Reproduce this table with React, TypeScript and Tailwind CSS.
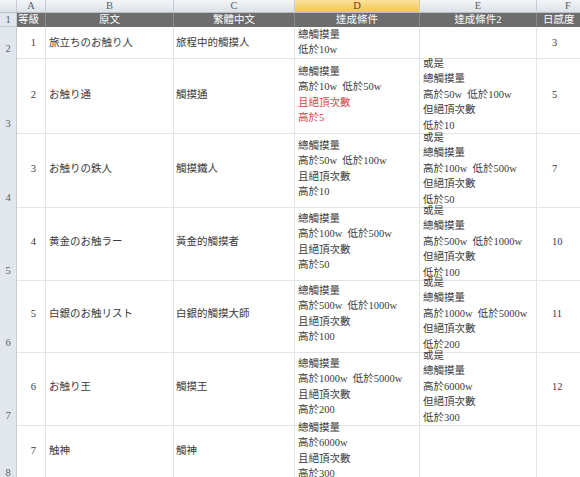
const cols = ["A", "B", "C", "D", "E", "F"];

type Row = {
  n: string;
  jp: string;
  zh: string;
  d: { t: string; red?: boolean }[];
  e: string[];
  f: string;
};

const rows: Row[] = [
  { n: "1", jp: "旅立ちのお触り人", zh: "旅程中的觸摸人", d: [{ t: "總觸摸量" }, { t: "低於10w" }], e: [], f: "3" },
  {
    n: "2",
    jp: "お触り通",
    zh: "觸摸通",
    d: [{ t: "總觸摸量" }, { t: "高於10w  低於50w" }, { t: "且絕頂次數", red: true }, { t: "高於5", red: true }],
    e: ["或是", "總觸摸量", "高於50w  低於100w", "但絕頂次數", "低於10"],
    f: "5",
  },
  {
    n: "3",
    jp: "お触りの鉄人",
    zh: "觸摸鐵人",
    d: [{ t: "總觸摸量" }, { t: "高於50w  低於100w" }, { t: "且絕頂次數" }, { t: "高於10" }],
    e: ["或是", "總觸摸量", "高於100w  低於500w", "但絕頂次數", "低於50"],
    f: "7",
  },
  {
    n: "4",
    jp: "黄金のお触ラー",
    zh: "黃金的觸摸者",
    d: [{ t: "總觸摸量" }, { t: "高於100w  低於500w" }, { t: "且絕頂次數" }, { t: "高於50" }],
    e: ["或是", "總觸摸量", "高於500w  低於1000w", "但絕頂次數", "低於100"],
    f: "10",
  },
  {
    n: "5",
    jp: "白銀のお触リスト",
    zh: "白銀的觸摸大師",
    d: [{ t: "總觸摸量" }, { t: "高於500w  低於1000w" }, { t: "且絕頂次數" }, { t: "高於100" }],
    e: ["或是", "總觸摸量", "高於1000w  低於5000w", "但絕頂次數", "低於200"],
    f: "11",
  },
  {
    n: "6",
    jp: "お触り王",
    zh: "觸摸王",
    d: [{ t: "總觸摸量" }, { t: "高於1000w  低於5000w" }, { t: "且絕頂次數" }, { t: "高於200" }],
    e: ["或是", "總觸摸量", "高於6000w", "但絕頂次數", "低於300"],
    f: "12",
  },
  {
    n: "7",
    jp: "触神",
    zh: "觸神",
    d: [{ t: "總觸摸量" }, { t: "高於6000w" }, { t: "且絕頂次數" }, { t: "高於300" }],
    e: [],
    f: "",
  },
];

// row heights, last row is cut by the window
const heights = ["h-[29px]", "h-[74px]", "h-[73px]", "h-[72px]", "h-[73px]", "h-[72px]", "h-[60px]"];

const font = { fontFamily: '"Liberation Serif", "Noto Sans CJK TC", serif' };

export default function App() {
  return (
    <div className="w-[580px] h-[477px] overflow-hidden bg-white text-[10.5px] text-[#3a3a3a]" style={font}>
      {/* column letters */}
      <div className="grid grid-cols-[17px_29px_128px_121px_125px_117px_63px] h-[13px] bg-gradient-to-b from-[#f3f5f8] to-[#dde2e8] border-b border-[#b9c0c9] text-[#5a5f66] leading-[12px]">
        <div className="border-r border-[#c6ccd4]" />
        {cols.map((c) => (
          <div
            key={c}
            className={
              c === "D"
                ? "text-center bg-gradient-to-b from-[#fbe29a] to-[#f3c746] border-r border-[#c6ccd4] text-[#5a4a20]"
                : "text-center border-r border-[#c6ccd4]"
            }
          >
            {c}
          </div>
        ))}
      </div>

      {/* header row */}
      <div className="grid grid-cols-[17px_29px_128px_121px_125px_117px_63px] h-[14px] leading-[13px]">
        <div className="bg-[#e2e7ed] border-r border-b border-[#c6ccd4] text-center text-[#5a5f66]">1</div>
        <div className="bg-[#6d6d6d] text-white border-r border-[#8a8a8a] pl-[1px]">等級</div>
        <div className="bg-[#6d6d6d] text-white border-r border-[#8a8a8a] text-center">原文</div>
        <div className="bg-[#6d6d6d] text-white border-r border-[#8a8a8a] text-center">繁體中文</div>
        <div className="bg-[#6d6d6d] text-white border-r border-[#8a8a8a] text-center">達成條件</div>
        <div className="bg-[#6d6d6d] text-white border-r border-[#8a8a8a] text-center">達成條件2</div>
        <div className="bg-[#6d6d6d] text-white pl-[6px]">日感度</div>
      </div>

      {rows.map((r, i) => (
        <div key={r.n} className={`grid grid-cols-[17px_29px_128px_121px_125px_117px_63px] ${heights[i]}`}>
          <div className="bg-[#e2e7ed] border-r border-b border-[#c6ccd4] flex items-end justify-center pb-[1px] text-[#5a5f66]">
            {i + 2}
          </div>
          <div className="border-r border-b border-[#e4e4e4] flex items-center justify-end pr-[9px]">{r.n}</div>
          <div className="border-r border-b border-[#e4e4e4] flex items-center pl-[3px]" style={{ fontFamily: '"Liberation Serif", "Noto Sans CJK JP", serif' }}>
            {r.jp}
          </div>
          <div className="border-r border-b border-[#e4e4e4] flex items-center pl-[2px]">{r.zh}</div>
          <div className="border-r border-b border-[#e4e4e4] flex flex-col justify-center pl-[3px] leading-[15.4px] whitespace-pre overflow-visible">
            {r.d.map((l, k) => (
              <div key={k} className={l.red ? "text-[#d8414a]" : ""}>
                {l.t}
              </div>
            ))}
          </div>
          <div className="border-r border-b border-[#e4e4e4] flex flex-col justify-center pl-[3px] leading-[15.4px] whitespace-pre overflow-visible">
            {r.e.map((l, k) => (
              <div key={k}>{l}</div>
            ))}
          </div>
          <div className="border-b border-[#e4e4e4] flex items-center pl-[15px]">{r.f}</div>
        </div>
      ))}
    </div>
  );
}
